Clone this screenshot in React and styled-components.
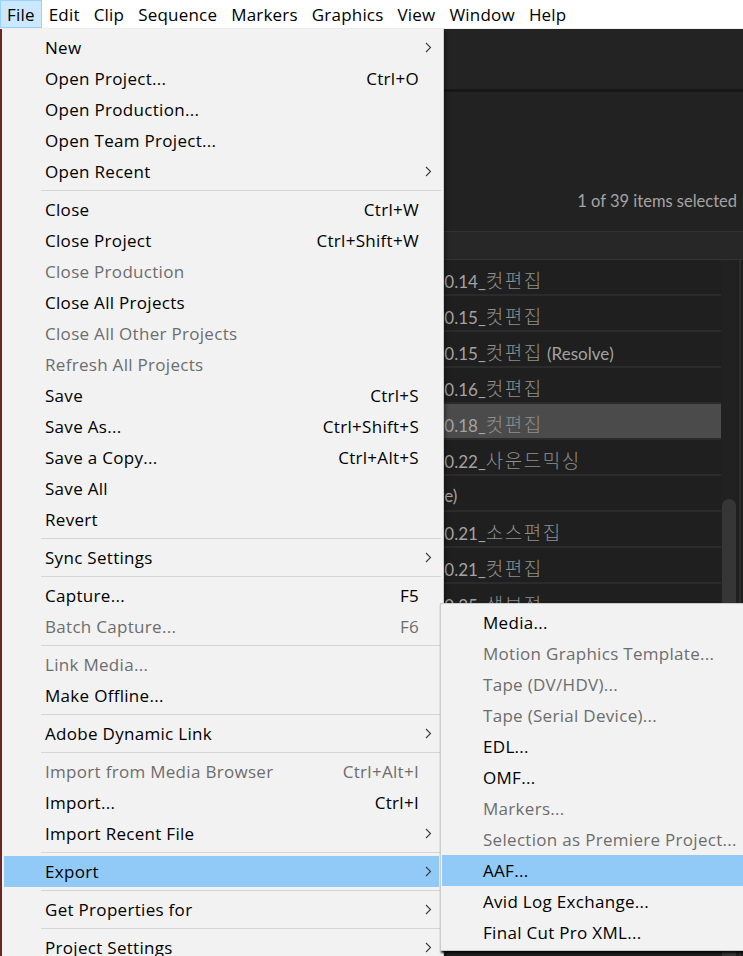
import styled, { createGlobalStyle } from "styled-components";

const GlobalStyle = createGlobalStyle`
  html, body {
    margin: 0;
    padding: 0;
    background: #232323;
  }
`;

const menuBar = ["File", "Edit", "Clip", "Sequence", "Markers", "Graphics", "View", "Window", "Help"];

// null = separator
const fileMenu = [
  { label: "New", sub: true },
  { label: "Open Project...", key: "Ctrl+O" },
  { label: "Open Production..." },
  { label: "Open Team Project..." },
  { label: "Open Recent", sub: true },
  null,
  { label: "Close", key: "Ctrl+W" },
  { label: "Close Project", key: "Ctrl+Shift+W" },
  { label: "Close Production", off: true },
  { label: "Close All Projects" },
  { label: "Close All Other Projects", off: true },
  { label: "Refresh All Projects", off: true },
  { label: "Save", key: "Ctrl+S" },
  { label: "Save As...", key: "Ctrl+Shift+S" },
  { label: "Save a Copy...", key: "Ctrl+Alt+S" },
  { label: "Save All" },
  { label: "Revert" },
  null,
  { label: "Sync Settings", sub: true },
  null,
  { label: "Capture...", key: "F5" },
  { label: "Batch Capture...", key: "F6", off: true },
  null,
  { label: "Link Media...", off: true },
  { label: "Make Offline..." },
  null,
  { label: "Adobe Dynamic Link", sub: true },
  null,
  { label: "Import from Media Browser", key: "Ctrl+Alt+I", off: true },
  { label: "Import...", key: "Ctrl+I" },
  { label: "Import Recent File", sub: true },
  null,
  { label: "Export", sub: true, active: true },
  null,
  { label: "Get Properties for", sub: true },
  null,
  { label: "Project Settings", sub: true },
];

const exportMenu = [
  { label: "Media..." },
  { label: "Motion Graphics Template...", off: true },
  { label: "Tape (DV/HDV)...", off: true },
  { label: "Tape (Serial Device)...", off: true },
  { label: "EDL..." },
  { label: "OMF..." },
  { label: "Markers...", off: true },
  { label: "Selection as Premiere Project...", off: true },
  { label: "AAF...", active: true },
  { label: "Avid Log Exchange..." },
  { label: "Final Cut Pro XML..." },
];

const sequences = [
  { pre: "2020.10.14_", ko: "컷편집" },
  { pre: "2020.10.15_", ko: "컷편집" },
  { pre: "2020.10.15_", ko: "컷편집", post: " (Resolve)" },
  { pre: "2020.10.16_", ko: "컷편집" },
  { pre: "2020.10.18_", ko: "컷편집", selected: true },
  { pre: "2020.10.22_", ko: "사운드믹싱" },
  { pre: "(Resolve)" },
  { pre: "2020.10.21_", ko: "소스편집" },
  { pre: "2020.10.21_", ko: "컷편집" },
  { pre: "2020.10.25_", ko: "색보정" },
  { pre: "2020.10.26_", ko: "컷편집" },
  { pre: "2020.10.27_", ko: "컷편집" },
  { pre: "2020.10.28_", ko: "컷편집" },
  { pre: "2020.10.29_", ko: "컷편집" },
  { pre: "2020.10.30_", ko: "컷편집" },
  { pre: "2020.10.31_", ko: "컷편집" },
  { pre: "2020.11.01_", ko: "컷편집" },
  { pre: "2020.11.02_", ko: "컷편집" },
  { pre: "2020.11.03_", ko: "컷편집" },
];

function Chevron() {
  return (
    <svg width="7" height="11" viewBox="0 0 7 11">
      <path d="M1 1 L5.5 5.5 L1 10" fill="none" stroke="#3a3a3a" strokeWidth="1.1" />
    </svg>
  );
}

function MenuList({ items }) {
  return items.map((item, i) =>
    item === null ? (
      <Separator key={i} />
    ) : (
      <Item key={i} $off={item.off} $active={item.active}>
        <Label>{item.label}</Label>
        {item.key && <Shortcut>{item.key}</Shortcut>}
        <ArrowCell>{item.sub && <Chevron />}</ArrowCell>
      </Item>
    )
  );
}

function App() {
  return (
    <>
      <GlobalStyle />
      <Page>
        <MenuBar>
          {menuBar.map((m) => (
            <BarItem key={m} $open={m === "File"}>
              {m}
            </BarItem>
          ))}
        </MenuBar>

        <Workspace>
          <TopStrip />
          <Divider />
          <Panel>
            <InfoBar>1 of 39 items selected</InfoBar>
            <Header />
            <Body>
              <List>
                {sequences.map((s, i) => (
                  <Row key={i} $selected={s.selected}>
                    {s.pre}
                    {s.ko && <Ko>{s.ko}</Ko>}
                    {s.post}
                  </Row>
                ))}
              </List>
              <ScrollCol>
                <Thumb />
              </ScrollCol>
              <EdgeLine />
            </Body>
          </Panel>
        </Workspace>

        <Dropdown>
          <MenuList items={fileMenu} />
        </Dropdown>
        <SubMenu>
          <MenuList items={exportMenu} />
        </SubMenu>
      </Page>
    </>
  );
}

const Page = styled.div`
  position: relative;
  width: 743px;
  height: 956px;
  overflow: hidden;
  display: flex;
  flex-direction: column;
  font-family: "Open Sans", "Noto Sans", sans-serif;
`;

const MenuBar = styled.div`
  height: 28px;
  flex: none;
  display: flex;
  align-items: stretch;
  background: #ffffff;
  border-bottom: 1px solid #f0f0f0;
`;

const BarItem = styled.div`
  display: flex;
  align-items: center;
  padding: 0 6px;
  font-size: 17px;
  letter-spacing: 0.2px;
  color: #000;
  border: 1px solid ${(p) => (p.$open ? "#99d1ff" : "transparent")};
  background: ${(p) => (p.$open ? "#cce8ff" : "transparent")};
`;

const Workspace = styled.div`
  flex: 1;
  display: flex;
  flex-direction: column;
  background: #232323;
  border-left: 2px solid #6e2628;
  min-height: 0;
`;

const TopStrip = styled.div`
  height: 60px;
  flex: none;
  background: #232323;
`;

const Divider = styled.div`
  height: 3px;
  flex: none;
  background: #171717;
`;

const Panel = styled.div`
  flex: 1;
  display: flex;
  flex-direction: column;
  background: #1f1f1f;
  min-height: 0;
`;

const InfoBar = styled.div`
  height: 139px;
  flex: none;
  box-sizing: border-box;
  display: flex;
  align-items: flex-end;
  justify-content: flex-end;
  padding: 0 6px 20px 0;
  font-family: "Lato", "Open Sans", sans-serif;
  font-size: 16.5px;
  line-height: 20px;
  color: #a4a4a4;
  background: #222222;
`;

const Header = styled.div`
  height: 29px;
  flex: none;
  box-sizing: border-box;
  background: #272727;
  border-top: 1px solid #333333;
  border-bottom: 1px solid #333333;
`;

const Body = styled.div`
  flex: 1;
  display: flex;
  min-height: 0;
`;

const List = styled.div`
  width: 719px;
  flex: none;
  display: flex;
  flex-direction: column;
`;

const Row = styled.div`
  height: 36px;
  flex: none;
  box-sizing: border-box;
  padding: 5px 0 0 389px;
  line-height: 30px;
  white-space: nowrap;
  border-bottom: 2px solid #2b2b2b;
  background: ${(p) => (p.$selected ? "#4b4b4b" : "transparent")};
  font-family: "Lato", "Noto Sans CJK KR", sans-serif;
  font-size: 17px;
  color: #a3a3a3;
`;

const Ko = styled.span`
  font-family: "Noto Sans CJK KR", sans-serif;
  font-size: 19px;
  font-weight: 300;
  letter-spacing: 1.5px;
  color: #8e8e8e;
`;

const ScrollCol = styled.div`
  width: 16px;
  flex: none;
  padding: 239px 1px 0;
  box-sizing: border-box;
  background: #212121;
`;

const Thumb = styled.div`
  height: 100%;
  border-radius: 7px 7px 0 0;
  background: #363636;
`;

const EdgeLine = styled.div`
  width: 2px;
  margin-left: 2px;
  flex: none;
  background: #2c2c2c;
`;

const Dropdown = styled.div`
  position: absolute;
  top: 29px;
  left: 2px;
  width: 442px;
  box-sizing: border-box;
  padding-top: 3px;
  background: #f2f2f2;
  border-right: 1px solid #cccccc;
  box-shadow: 2px 2px 3px rgba(0, 0, 0, 0.35);
`;

const SubMenu = styled.div`
  position: absolute;
  top: 603px;
  left: 440px;
  width: 320px;
  box-sizing: border-box;
  padding: 3px 0 2px;
  background: #f2f2f2;
  border: 1px solid #cccccc;
  box-shadow: 1px 2px 2px rgba(0, 0, 0, 0.85);
`;

const Item = styled.div`
  height: 31px;
  display: flex;
  align-items: center;
  margin: 0 4px 0 2px;
  padding-left: 41px;
  font-size: 17px;
  letter-spacing: 0.3px;
  white-space: nowrap;
  color: ${(p) => (p.$off ? "#6d6d6d" : "#000000")};
  background: ${(p) => (p.$active ? "#91c9f7" : "transparent")};

  ${SubMenu} & {
    margin: 0 0 0 1px;
  }
`;

const Label = styled.span`
  flex: 1;
`;

const Shortcut = styled.span`
  text-align: right;
`;

const ArrowCell = styled.span`
  width: 20px;
  flex: none;
  display: flex;
  align-items: center;
  padding-left: 6px;
  box-sizing: border-box;
`;

const Separator = styled.div`
  height: 7px;
  margin: 0 2px 0 39px;
  display: flex;
  align-items: center;
  &::after {
    content: "";
    flex: 1;
    height: 1px;
    background: #d6d6d6;
  }
`;

export default App;
